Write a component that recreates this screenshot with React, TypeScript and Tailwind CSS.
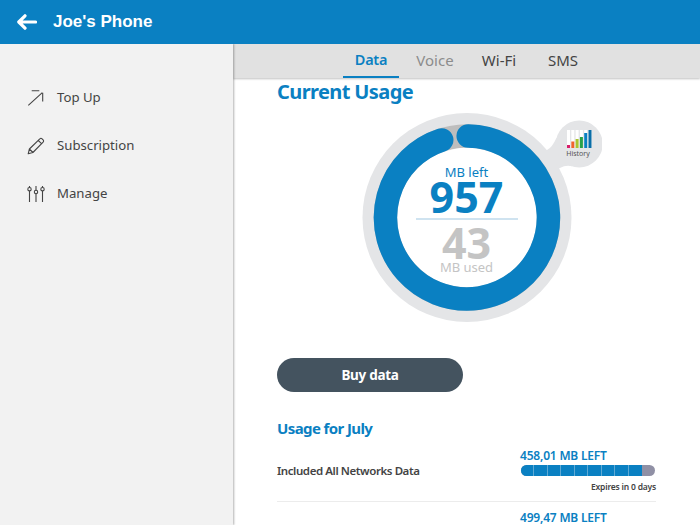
const font = "font-['Noto_Sans',sans-serif]";

function Gauge() {
  const cx = 135, cy = 107.5;
  const p = (x: number, y: number) => `${cx + x} ${cy + y}`;
  return (
    <svg width="270" height="214" viewBox="0 0 270 214" className="block">
      <path fill="#e4e5e7" d="M215 40 Q220 38 224.500 27.800 L240.200 56.200 Q233 55 228.500 57.800 L200 70 Z" />
      <circle cx="247.200" cy="34" r="23.500" fill="#e4e5e7" />
      <circle cx={cx} cy={cy} r="104.500" fill="#e4e5e7" />
      <circle cx={cx} cy={cy} r="81.500" fill="none" stroke="#bdbdbd" strokeWidth="23.500" />
      <circle cx={cx} cy={cy} r="69.700" fill="#ffffff" />
      <path
        fill="none"
        stroke="#0a80c2"
        strokeWidth="23.500"
        strokeLinecap="round"
        d={`M ${p(1.2, -81.5)} A 81.5 81.5 0 1 1 ${p(-25.3, -77.5)}`}
      />
      <g transform="translate(235 20)">
        {[0, 4.3, 8.6, 12.9, 17.2, 21.5].map((x) => (
          <rect key={x} x={x} y="0" width="3" height="18" fill="#ffffff" />
        ))}
        <rect x="0" y="15" width="3" height="3" fill="#d81e6b" />
        <rect x="4.300" y="11.500" width="3" height="6.500" fill="#f0642d" />
        <rect x="8.600" y="9" width="3" height="9" fill="#a9c52f" />
        <rect x="12.900" y="7" width="3" height="11" fill="#2aa14a" />
        <rect x="17.200" y="3" width="3" height="15" fill="#0a80c2" />
        <rect x="21.500" y="0" width="3" height="18" fill="#0a6ea8" />
      </g>
    </svg>
  );
}

function TopUpIcon() {
  return (
    <svg width="18" height="18" viewBox="0 0 18 18" fill="none" stroke="#444" strokeWidth="1.1">
      <path d="M1.3 16.300 15.300 3.700M4.700 1.700h7.600M15.700 3.700v8.900" />
    </svg>
  );
}

function PencilIcon() {
  return (
    <svg width="18" height="18" viewBox="0 0 18 18" fill="none" stroke="#444" strokeWidth="1.1" strokeLinejoin="round">
      <path d="M1.200 16.800 2.400 12 12.800 1.800a1.600 1.600 0 0 1 2.300 0l1 1a1.600 1.600 0 0 1 0 2.300L5.900 15.500ZM2.400 12l3.500 3.500M11.200 3.400l3.500 3.500" />
    </svg>
  );
}

function ManageIcon() {
  return (
    <svg width="18" height="18" viewBox="0 0 18 18" fill="none" stroke="#444" strokeWidth="1.1">
      <path d="M2.500 6v11M2.500 1v1.500M9 9v8M9 1v4.500M15.500 6v11M15.500 1v1.500" />
      <circle cx="2.500" cy="4.200" r="1.700" />
      <circle cx="9" cy="7" r="1.700" />
      <circle cx="15.500" cy="4.200" r="1.700" />
    </svg>
  );
}

function SideItem({ icon, label }: { icon: React.ReactNode; label: string }) {
  return (
    <div className="flex h-12 items-center gap-[12px] pl-[27px] text-[13.200px] text-[#444]">
      {icon}
      <span>{label}</span>
    </div>
  );
}

function Tab({ label, color, active }: { label: string; color: string; active?: boolean }) {
  return (
    <div
      className={`flex h-full w-14 items-center justify-center border-b-2 ${color} ${
        active ? "border-[#0a80c2] text-[14.500px] font-semibold tracking-[-0.3px]" : "border-transparent text-[15px]"
      }`}
    >
      {label}
    </div>
  );
}

function Segments() {
  return (
    <div className="flex h-[11px] w-[134px] overflow-hidden rounded-full bg-[#9090a5]">
      {Array.from({ length: 9 }).map((_, i) => (
        <div key={i} className="h-full w-[13.440px] border-r border-[#5fa9d4] bg-[#0a80c2] last:border-r-0" />
      ))}
    </div>
  );
}

export default function App() {
  return (
    <div className={`flex h-[525px] w-[700px] flex-col overflow-hidden bg-white ${font}`}>
      <header className="z-20 flex h-11 shrink-0 items-center gap-[16px] bg-[#0a80c2] pl-[17px] text-white">
        <svg width="20" height="16" viewBox="0 0 20 16" fill="none" stroke="#fff" strokeWidth="3.200" strokeLinecap="round" strokeLinejoin="round">
          <path d="M18.500 8H2.500M8 1.800 1.800 8 8 14.200" />
        </svg>
        <span className="font-['Liberation_Sans',sans-serif] text-[17px] font-bold">Joe's Phone</span>
      </header>
      <div className="flex min-h-0 flex-1">
        <aside className="z-10 w-[233px] shrink-0 bg-[#f2f2f2] pt-[30px] shadow-[1px_0_2px_rgba(0,0,0,0.3)]">
          <SideItem icon={<TopUpIcon />} label="Top Up" />
          <SideItem icon={<PencilIcon />} label="Subscription" />
          <SideItem icon={<ManageIcon />} label="Manage" />
        </aside>
        <main className="flex min-w-0 flex-1 flex-col">
          <nav className="flex h-[34px] shrink-0 justify-center gap-2 bg-[#e1e1e1] pl-px shadow-[0_1px_2px_rgba(0,0,0,0.25)]">
            <Tab label="Data" color="text-[#0a80c2]" active />
            <Tab label="Voice" color="text-[#8c8c8c]" />
            <Tab label="Wi-Fi" color="text-[#444]" />
            <Tab label="SMS" color="text-[#444]" />
          </nav>
          <div className="ml-[44px] w-[379px]">
            <h1 className="h-[28px] text-[20px] leading-[28px] font-bold tracking-[-0.6px] text-[#0a80c2]">Current Usage</h1>
            <div className="relative mt-[4px] flex justify-center">
              <Gauge />
              <div className="absolute top-[54px] left-1/2 flex w-[104px] -translate-x-1/2 flex-col items-center">
                <div className="h-[17px] text-[13px] leading-[17px] text-[#0a80c2]">MB left</div>
                <div className="h-[32px] text-[43px] leading-[32px] font-bold text-[#0a80c2]">957</div>
                <div className="mt-[5px] h-[1.500px] w-[102px] shrink-0 bg-[#cfe3f0]" />
                <div className="mt-[7px] h-[32px] text-[43px] leading-[32px] font-bold text-[#c4c4c4]">43</div>
                <div className="h-[17px] text-[13px] leading-[17px] text-[#c4c4c4]">MB used</div>
              </div>
              <div className="absolute top-[39px] left-[301px] -translate-x-1/2 text-[7px] leading-[10px] text-[#555]">History</div>
            </div>
            <button className="mt-[34px] flex h-[34px] w-[186px] items-center justify-center rounded-full bg-[#44535f] text-[13.500px] font-bold tracking-[-0.3px] text-white">
              Buy data
            </button>
            <h2 className="mt-[24px] h-[24px] text-[15px] leading-[24px] font-bold tracking-[-0.6px] text-[#0a80c2]">Usage for July</h2>
            <div className="mt-[8px] flex items-center justify-between border-b border-[#ececec] pb-[7px]">
              <div className="text-[11.500px] font-semibold tracking-[-0.42px] text-[#444]">Included All Networks Data</div>
              <div className="flex w-[136px] flex-col items-start">
                <div className="h-[16px] text-[12px] leading-[16px] font-semibold tracking-[-0.2px] text-[#0a80c2]">458,01 MB LEFT</div>
                <div className="mt-px ml-px"><Segments /></div>
                <div className="mt-[4px] h-[14px] self-end text-[8.500px] leading-[14px] font-semibold tracking-[-0.2px] text-[#444]">Expires in 0 days</div>
              </div>
            </div>
            <div className="mt-[8px] ml-[243px] h-[16px] text-[12px] leading-[16px] font-semibold tracking-[-0.2px] text-[#0a80c2]">499,47 MB LEFT</div>
          </div>
        </main>
      </div>
    </div>
  );
}
